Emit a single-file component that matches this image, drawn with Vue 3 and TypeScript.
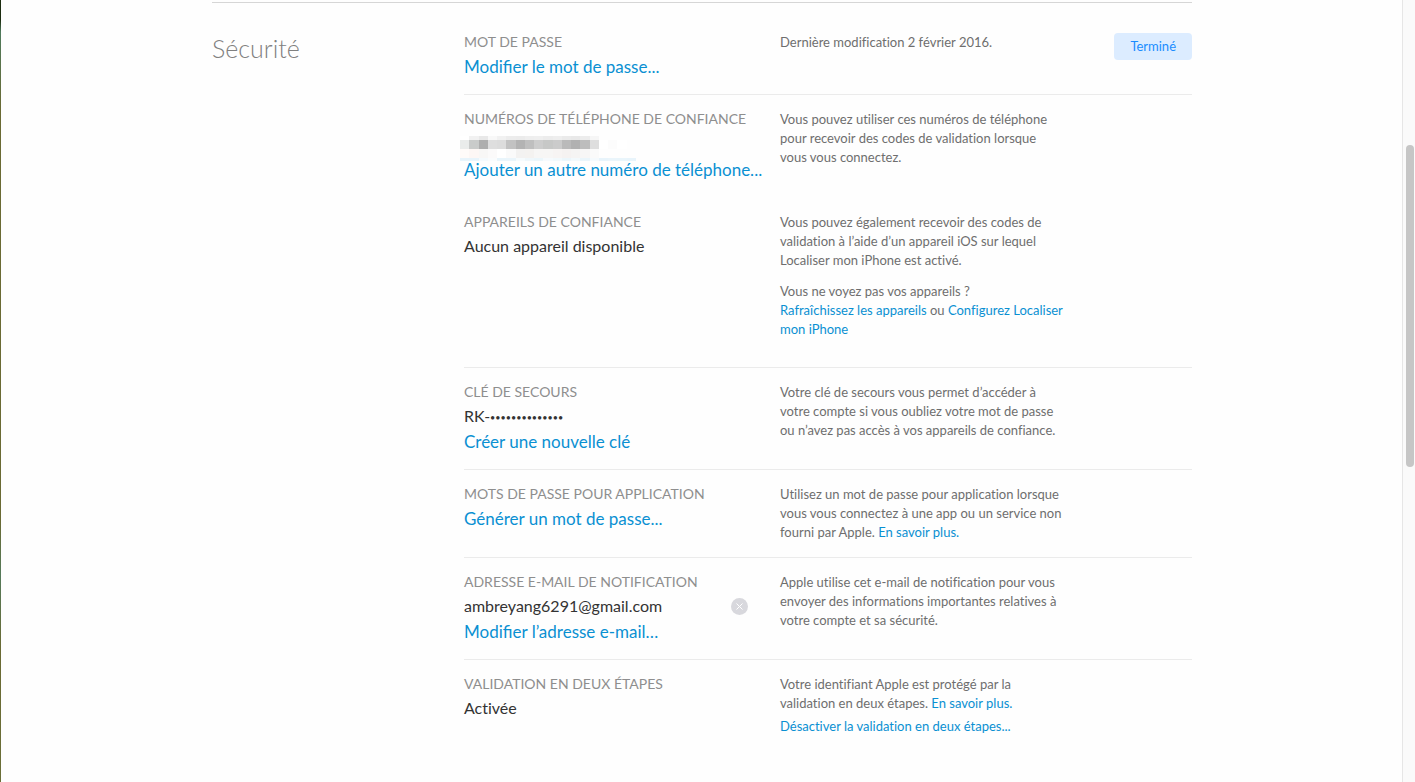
<script setup lang="ts">
interface Cell {
  x: number
  y: number
  w: number
  h: number
  fill: string
}

const bands: { y: number; h: number; fills: string[] }[] = [
  {
    y: 0,
    h: 4,
    fills: ['#ffffff', '#f1f1f1', '#e8e8e8', '#f8f8f8', '#f1f1f1', '#ececec', '#ebebeb', '#eeeeee', '#efefef', '#ececec', '#eeeeee', '#eaeaea', '#e8e8e8', '#ececec', '#f6f6f6'],
  },
  {
    y: 4,
    h: 9,
    fills: ['#eaeceb', '#c9cbca', '#aeaeae', '#dedede', '#dcdcdc', '#c2c2c2', '#b3b3b3', '#bfbfbf', '#cdcdcd', '#c7c8c7', '#cbcbcb', '#bababa', '#b1b1b1', '#bdbdbd', '#dedede', '#ffffff', '#fcfcfc', '#ffffff', '#fefefe'],
  },
  {
    y: 13,
    h: 9,
    fills: ['#fffbf9', '#fdf7f5', '#f8f7f6', '#fbfafa', '#ffffff', '#fafafa', '#f3f2f1', '#f4f2f0', '#f7f6f5', '#f7f6f5', '#f7f4f3', '#f5f2f1', '#f5f4f3', '#f7f6f6', '#fafafa'],
  },
  {
    y: 22,
    h: 3,
    fills: ['#e8f4fb', '#e8f4fb', '#f5fafd', '#fafcfd', '#e9f5fb', '#eaf5fb', '#f6fbfd', '#eff7fb', '#ebf6fb', '#f6fafd', '#f2f9fc', '#ebf6fb', '#f2f9fc', '#eaf5fb', '#f5fafd', '#e8f4fb', '#eaf5fb', '#e9f5fb', '#e8f4fb'],
  },
]

const cells: Cell[] = bands.flatMap((band) =>
  band.fills.map((fill, i) => ({ x: i * 9, y: band.y, w: 9, h: band.h, fill })),
)
</script>

<template>
  <div class="page">
    <div class="edge"></div>
    <main class="viewport">
      <section class="security">
        <h1>Sécurité</h1>
        <div class="rows">
          <div class="row first">
            <div class="entry">
              <h2>MOT DE PASSE</h2>
              <a href="#">Modifier le mot de passe...</a>
            </div>
            <div class="help">
              <p>Dernière modification 2 février 2016.</p>
            </div>
            <button type="button" class="done">Terminé</button>
          </div>

          <div class="row joined">
            <div class="entry">
              <h2>NUMÉROS DE TÉLÉPHONE DE CONFIANCE</h2>
              <svg class="masked" width="176" height="25" viewBox="0 0 171 25" preserveAspectRatio="none" shape-rendering="crispEdges" role="img" aria-label="Numéro masqué">
                <rect v-for="(c, i) in cells" :key="i" :x="c.x" :y="c.y" :width="c.w" :height="c.h" :fill="c.fill" />
              </svg>
              <a href="#">Ajouter un autre numéro de téléphone...</a>
            </div>
            <div class="help">
              <p>Vous pouvez utiliser ces numéros de téléphone<br />pour recevoir des codes de validation lorsque<br />vous vous connectez.</p>
            </div>
          </div>

          <div class="row devices">
            <div class="entry">
              <h2>APPAREILS DE CONFIANCE</h2>
              <span class="value">Aucun appareil disponible</span>
            </div>
            <div class="help">
              <p>Vous pouvez également recevoir des codes de<br />validation à l’aide d’un appareil iOS sur lequel<br />Localiser mon iPhone est activé.</p>
              <p>Vous ne voyez pas vos appareils ?<br /><a href="#">Rafraîchissez les appareils</a> ou <a href="#">Configurez Localiser<br />mon iPhone</a></p>
            </div>
          </div>

          <div class="row">
            <div class="entry">
              <h2>CLÉ DE SECOURS</h2>
              <span class="value">RK-<span class="dots">••••••••••••••</span></span>
              <a href="#">Créer une nouvelle clé</a>
            </div>
            <div class="help">
              <p>Votre clé de secours vous permet d’accéder à<br />votre compte si vous oubliez votre mot de passe<br />ou n’avez pas accès à vos appareils de confiance.</p>
            </div>
          </div>

          <div class="row">
            <div class="entry">
              <h2>MOTS DE PASSE POUR APPLICATION</h2>
              <a href="#">Générer un mot de passe...</a>
            </div>
            <div class="help">
              <p>Utilisez un mot de passe pour application lorsque<br />vous vous connectez à une app ou un service non<br />fourni par Apple. <a href="#">En savoir plus.</a></p>
            </div>
          </div>

          <div class="row">
            <div class="entry">
              <h2>ADRESSE E-MAIL DE NOTIFICATION</h2>
              <div class="email">
                <span class="value">ambreyang6291@gmail.com</span>
                <button type="button" class="remove" aria-label="Supprimer l’adresse">
                  <svg width="17" height="17" viewBox="0 0 17 17">
                    <circle cx="8.5" cy="8.5" r="8.5" fill="#d8d8dd" />
                    <path d="M5.5 5.5l6 6M11.5 5.5l-6 6" stroke="#fff" stroke-width="1" />
                  </svg>
                </button>
              </div>
              <a href="#">Modifier l’adresse e-mail…</a>
            </div>
            <div class="help">
              <p>Apple utilise cet e-mail de notification pour vous<br />envoyer des informations importantes relatives à<br />votre compte et sa sécurité.</p>
            </div>
          </div>

          <div class="row last">
            <div class="entry">
              <h2>VALIDATION EN DEUX ÉTAPES</h2>
              <span class="value">Activée</span>
            </div>
            <div class="help">
              <p>Votre identifiant Apple est protégé par la<br />validation en deux étapes. <a href="#">En savoir plus.</a></p>
              <p class="action"><a href="#">Désactiver la validation en deux étapes...</a></p>
            </div>
          </div>
        </div>
      </section>
    </main>
    <div class="scrollbar"><div class="thumb"></div></div>
  </div>
</template>

<style>
body {
  margin: 0;
  background: #fefefe;
}
</style>

<style scoped>
.page {
  display: flex;
  min-height: 100vh;
  font-family: Lato, "Open Sans", sans-serif;
  color: #333;
}
.edge {
  width: 1px;
  background: linear-gradient(#1c2c10 0, #1c2c10 20px, #4f7a5c 32px, #6a6a34 110px, #6a6a34 520px, #557a5a 575px, #6a6a34 650px, #6a6f38 100%);
}
.viewport {
  flex: 1;
  padding: 2px 16px 0 17px;
}
.security {
  display: flex;
  max-width: 980px;
  margin: 0 auto;
  border-top: 1px solid #d6d6d6;
}
h1 {
  width: 252px;
  margin: 28px 0 0;
  font-size: 25px;
  line-height: 34px;
  font-weight: 300;
  color: #808080;
}
.rows {
  flex: 1;
}
.row {
  display: flex;
  align-items: flex-start;
  padding: 12px 0 15px;
  border-bottom: 1px solid #ebebeb;
}
.row.first {
  padding-top: 27px;
}
.row.joined {
  padding-bottom: 16px;
  border-bottom: 0;
}
.row.devices {
  padding-bottom: 28px;
}
.row.last {
  border-bottom: 0;
}
.entry {
  display: flex;
  flex-direction: column;
  align-items: flex-start;
  width: 316px;
  font-size: 17px;
  line-height: 25px;
  white-space: nowrap;
}
h2 {
  margin: 0;
  font-size: 14px;
  line-height: 24px;
  font-weight: 400;
  color: #8e8e8e;
}
a {
  color: #0a90d2;
  text-decoration: none;
}
.value {
  margin-bottom: 2px;
  font-size: 16px;
  line-height: 23px;
  font-variant-ligatures: none;
}
.masked {
  margin: 5px 0 -4px -4px;
}
.dots {
  font-size: 9px;
  line-height: 1;
  vertical-align: 1px;
}
.email {
  display: flex;
  align-items: center;
  justify-content: space-between;
  width: 284px;
}
.remove {
  display: flex;
  padding: 0;
  border: 0;
  background: none;
}
.help {
  flex: 1;
  padding-top: 3px;
  font-size: 13px;
  line-height: 19px;
  color: #6e6e6e;
  white-space: nowrap;
  font-variant-ligatures: none;
}
.help p {
  margin: 0 0 12px;
}
.help p:last-child {
  margin-bottom: 0;
}
.row.last .help p {
  margin-bottom: 4px;
}
.done {
  margin-top: 3px;
  padding: 0 16px;
  border: 0;
  border-radius: 4px;
  background: #dcecff;
  color: #1a8cff;
  font-family: inherit;
  font-size: 13px;
  line-height: 27px;
}
.scrollbar {
  width: 12px;
  border-left: 1px solid #e6e6e6;
  background: #fafafa;
}
.thumb {
  width: 8px;
  height: 322px;
  margin: 145px 0 0 3px;
  border-radius: 4px;
  background: #c6c6c6;
}
</style>
